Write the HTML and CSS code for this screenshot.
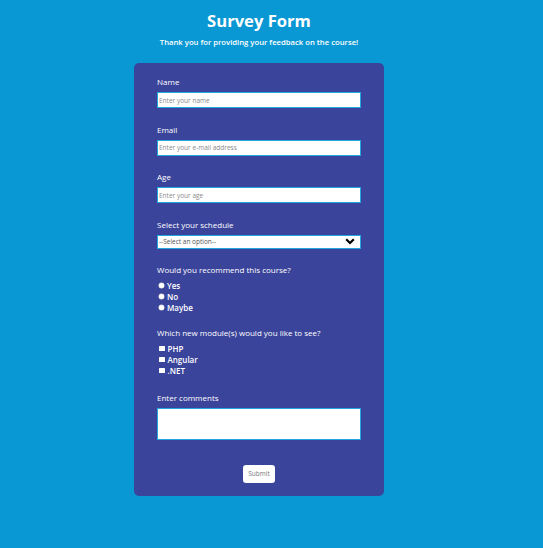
FILE: index.html
```html
<!DOCTYPE html>
<html lang="en">
<head>
<meta charset="utf-8">
<title>Survey Form</title>
<link rel="stylesheet" href="styles.css">
</head>
<body>
<div class="page">
  <h1 id="title" class="title">Survey Form</h1>
  <p id="description" class="subtitle">Thank you for providing your feedback on the course!</p>
  <form id="survey-form" class="card">
    <div class="group">
      <label class="label" for="name">Name</label>
      <input class="field" id="name" type="text" placeholder="Enter your name">
    </div>
    <div class="group">
      <label class="label" for="email">Email</label>
      <input class="field" id="email" type="email" placeholder="Enter your e-mail address">
    </div>
    <div class="group">
      <label class="label" for="number">Age</label>
      <input class="field" id="number" type="number" placeholder="Enter your age">
    </div>
    <div class="group">
      <label class="label" for="dropdown">Select your schedule</label>
      <div class="select-wrap">
        <select class="select" id="dropdown">
          <option>--Select an option--</option>
        </select>
        <svg class="chevron" width="10" height="7" viewBox="0 0 10 7"><path d="M1.2 1.2 L5 5 L8.8 1.2" fill="none" stroke="#000" stroke-width="2.2"/></svg>
      </div>
    </div>
    <div class="group tight">
      <p class="label">Would you recommend this course?</p>
      <label class="option"><input class="radio" type="radio" name="rec"><span>Yes</span></label>
      <label class="option"><input class="radio" type="radio" name="rec"><span>No</span></label>
      <label class="option"><input class="radio" type="radio" name="rec"><span>Maybe</span></label>
    </div>
    <div class="group">
      <p class="label">Which new module(s) would you like to see?</p>
      <label class="option"><input class="check" type="checkbox"><span>PHP</span></label>
      <label class="option"><input class="check" type="checkbox"><span>Angular</span></label>
      <label class="option"><input class="check" type="checkbox"><span>.NET</span></label>
    </div>
    <div class="group last">
      <label class="label" for="comments">Enter comments</label>
      <textarea class="comments" id="comments"></textarea>
    </div>
    <div class="actions">
      <button class="submit" id="submit" type="submit">Submit</button>
    </div>
  </form>
</div>
</body>
</html>
```

FILE: styles.css
```css
html, body {
  margin: 0;
  padding: 0;
  background: #0998d4;
}
body {
  font-family: "Open Sans", "Noto Sans", sans-serif;
  color: #ffffff;
}
.page {
  width: 518px;
  padding-top: 9px;
  display: flex;
  flex-direction: column;
  align-items: center;
}
.title {
  margin: 0;
  font-size: 16.6px;
  line-height: 23px;
  font-weight: 700;
}
.subtitle {
  margin: 5px 0 0;
  font-size: 7.7px;
  line-height: 11px;
  font-weight: 600;
}
.card {
  margin-top: 15px;
  width: 250px;
  box-sizing: border-box;
  padding: 13px 23px 13px;
  background: #3b449b;
  border-radius: 5px;
  display: flex;
  flex-direction: column;
}
.group {
  display: flex;
  flex-direction: column;
  margin-bottom: 15.5px;
}
.group.tight {
  margin-bottom: 14px;
}
.group.last {
  margin-bottom: 0;
}
.label {
  display: block;
  margin: 0 0 5px;
  font-size: 8px;
  line-height: 11px;
}
.field {
  box-sizing: border-box;
  width: 204px;
  height: 16px;
  margin: 0;
  padding: 0 1px;
  border: 1px solid #22a6de;
  background: #ffffff;
  font-family: "Open Sans", sans-serif;
  font-size: 6.5px;
  color: #333;
  outline: none;
}
.field::placeholder {
  color: #8a8a8a;
}
.select-wrap {
  position: relative;
  width: 204px;
  height: 14px;
}
.select {
  display: block;
  appearance: none;
  -webkit-appearance: none;
  box-sizing: border-box;
  width: 204px;
  height: 14px;
  margin: 0;
  padding: 0 1px;
  border: 1px solid #22a6de;
  border-radius: 0;
  background: #ffffff;
  font-family: "Open Sans", sans-serif;
  font-size: 6.5px;
  color: #555;
  outline: none;
}
.chevron {
  position: absolute;
  right: 6px;
  top: 3.5px;
  pointer-events: none;
}
.option {
  display: flex;
  align-items: center;
  height: 11px;
  font-size: 8px;
  line-height: 11px;
  font-weight: 600;
}
.radio, .check {
  appearance: none;
  -webkit-appearance: none;
  margin: 0 3px 0 2px;
  background: #ffffff;
  border: none;
  flex: none;
}
.radio {
  width: 5px;
  height: 5px;
  border-radius: 50%;
  box-shadow: 0 0 0 0.5px #c8c8d8;
}
.check {
  width: 5.5px;
  height: 5.5px;
  border-radius: 0.5px;
}
.comments {
  display: block;
  box-sizing: border-box;
  width: 204px;
  height: 32px;
  margin: 0;
  border: 1px solid #22a6de;
  background: #ffffff;
  resize: none;
  outline: none;
}
.actions {
  margin-top: 25px;
  display: flex;
  justify-content: center;
}
.submit {
  width: 32px;
  height: 18px;
  padding: 0;
  border: none;
  border-radius: 3px;
  background: #ffffff;
  font-family: "Open Sans", sans-serif;
  font-size: 6.5px;
  color: #777;
}
```
